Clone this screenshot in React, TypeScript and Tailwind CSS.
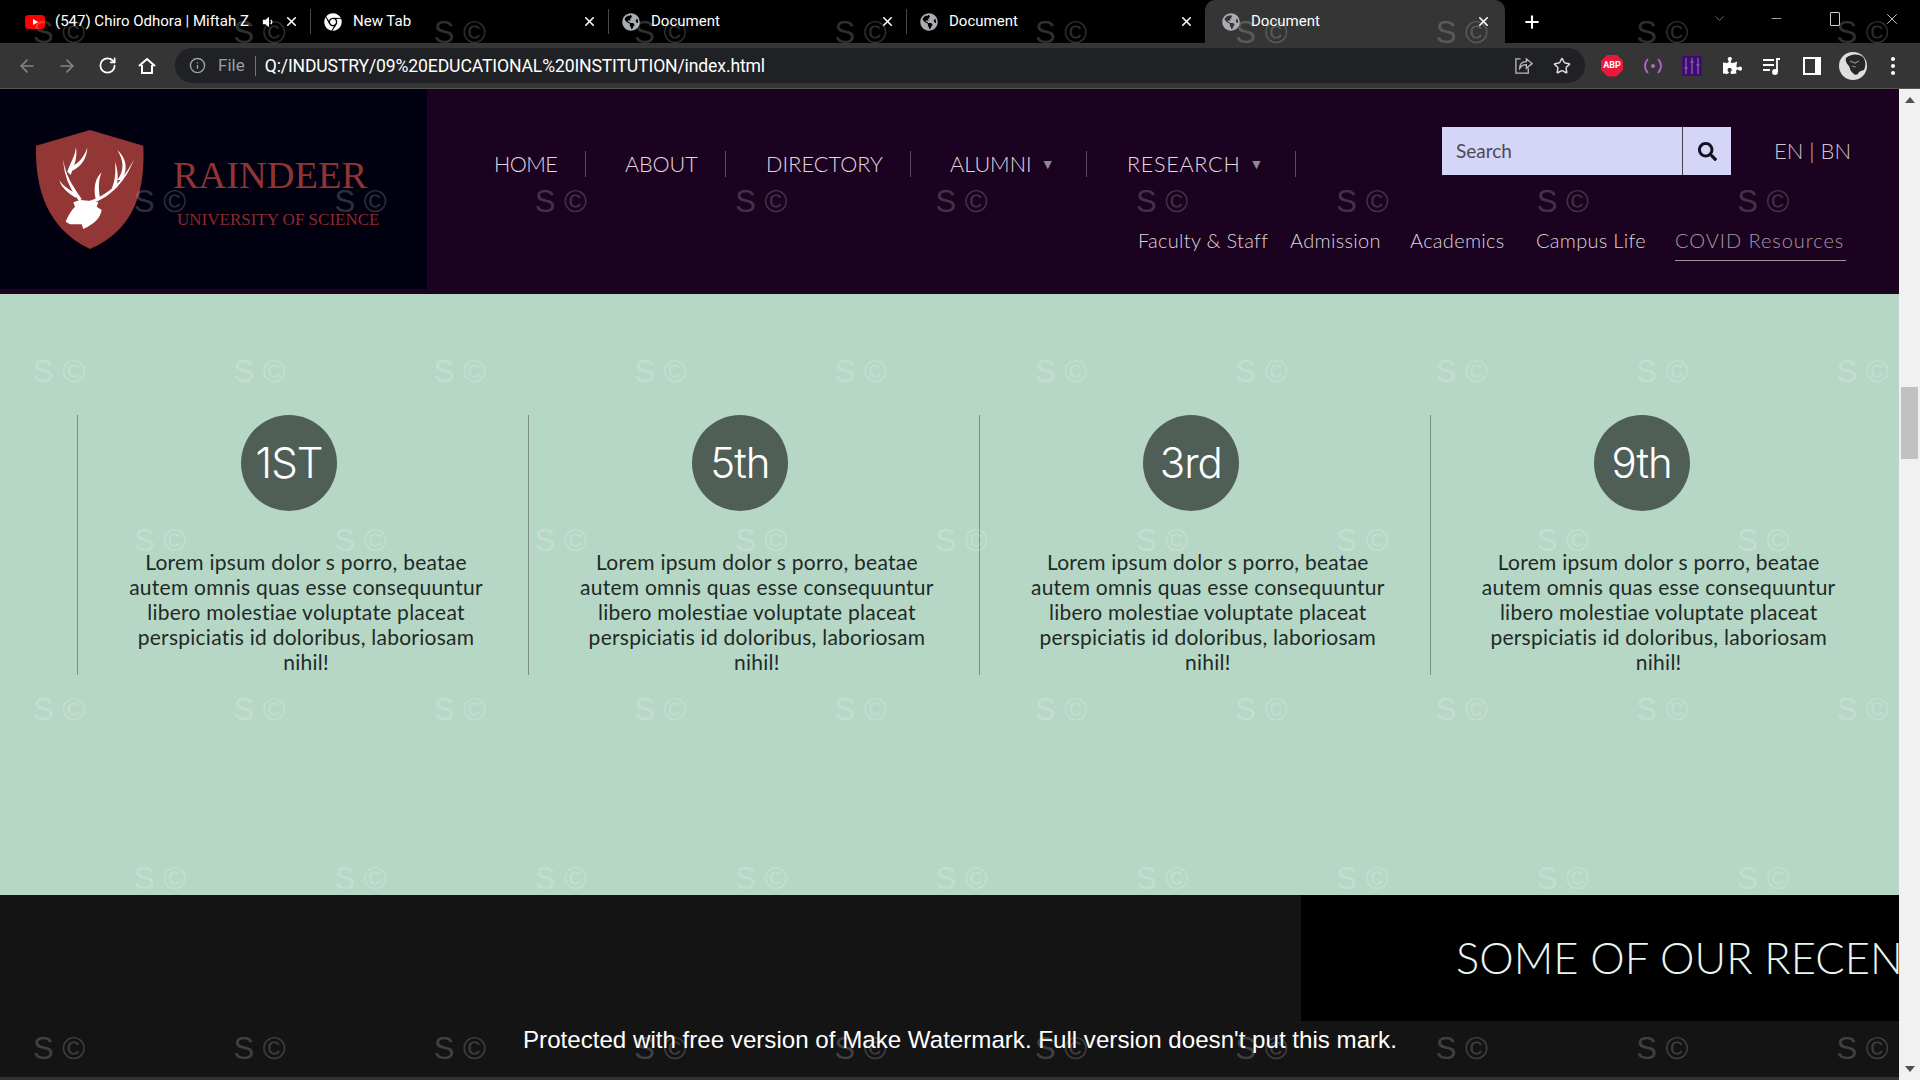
import { ArrowLeft, ArrowRight, ChevronDown, Info, Minus, Plus, RotateCw, Star, X } from "lucide-react";
import { FaChrome, FaGlobeAmericas, FaPuzzlePiece, FaSearch } from "react-icons/fa";

const TABS = [
  { title: "(547) Chiro Odhora | Miftah Z", icon: "yt" },
  { title: "New Tab", icon: "chrome" },
  { title: "Document", icon: "globe" },
  { title: "Document", icon: "globe" },
  { title: "Document", icon: "globe", active: true },
];

const NAV = [
  { label: "HOME", w: "w-[92px]", pl: "pl-0", track: "tracking-[-0.6px]" },
  { label: "ABOUT", w: "w-[140px]", pl: "pl-[39px]", track: "tracking-[-0.1px]" },
  { label: "DIRECTORY", w: "w-[185px]", pl: "pl-[40px]", track: "tracking-[0.1px]" },
  { label: "ALUMNI", w: "w-[176px]", pl: "pl-[39px]", track: "tracking-[0px]", caret: true },
  { label: "RESEARCH", w: "w-[209px]", pl: "pl-[40px]", track: "tracking-[0.7px]", caret: true },
];

const SUB_NAV = ["Faculty & Staff", "Admission", "Academics", "Campus Life"];

const STATS = ["1ST", "5th", "3rd", "9th"];

const LOREM = [
  "Lorem ipsum dolor s porro, beatae",
  "autem omnis quas esse consequuntur",
  "libero molestiae voluptate placeat",
  "perspiciatis id doloribus, laboriosam",
  "nihil!",
];

const WM_ROWS = [false, true, false, true, false, true, false];

function TabIcon({ kind }: { kind: string }) {
  if (kind === "yt") {
    return (
      <svg viewBox="0 0 20 14" className="w-[20px] h-[14px]">
        <rect width="20" height="14" rx="3.5" fill="#f00" />
        <path d="M8 4v6l5-3Z" fill="#fff" />
      </svg>
    );
  }
  if (kind === "chrome") return <FaChrome className="w-[18px] h-[18px] text-white" />;
  return <FaGlobeAmericas className="w-[18px] h-[18px] text-[#a9adb2]" />;
}

function TabStrip() {
  return (
    <div className="h-[43px] bg-black flex items-center pl-[13px] text-white">
      {TABS.map((tab, i) => (
        <div
          key={i}
          className={
            tab.active
              ? "w-[300px] h-[43px] bg-[#353535] rounded-t-[10px] flex items-center pl-[16px] pr-[14px]"
              : "w-[298px] h-[43px] flex items-center pl-[12px] pr-[11px]"
          }
        >
          <div className="w-[20px] flex justify-center shrink-0">
            <TabIcon kind={tab.icon} />
          </div>
          <span className="ml-[10px] flex-1 text-[15px] whitespace-nowrap overflow-hidden font-['Roboto',sans-serif]">
            {tab.title}
          </span>
          {tab.icon === "yt" && (
            <svg viewBox="0 0 16 16" className="w-[14px] h-[14px] mx-[8px] text-white" fill="currentColor">
              <path d="M1 5.5h3L8 2v12l-4-3.5H1Z" />
              <path d="M10 5.5c1.4 1.4 1.4 3.6 0 5" fill="none" stroke="currentColor" strokeWidth="1.3" />
            </svg>
          )}
          <X className="w-[15px] h-[15px]" strokeWidth={2.5} />
          {!tab.active && i < 3 && <div className="w-px h-[25px] bg-[#4a4a4a] ml-[11px] -mr-[11px]" />}
        </div>
      ))}
      <Plus className="w-[20px] h-[20px] ml-[17px]" strokeWidth={2.5} />
      <ChevronDown className="w-[15px] h-[15px] ml-[170px] mb-[7px] text-[#aaa]" strokeWidth={1} />
      <Minus className="w-[15px] h-[15px] ml-[42px] mb-[7px]" strokeWidth={1} />
      <div className="w-[10px] h-[14px] border border-[#ccc] rounded-[1px] ml-[46px] mb-[6px]" />
      <X className="w-[18px] h-[18px] ml-[43px] mb-[6px]" strokeWidth={1} />
    </div>
  );
}

function Toolbar() {
  return (
    <div className="h-[46px] bg-[#353535] border-b border-[#555] flex items-center font-['Roboto',sans-serif]">
      <ArrowLeft className="w-[20px] h-[20px] ml-[17px] text-[#848484]" strokeWidth={2} />
      <ArrowRight className="w-[20px] h-[20px] ml-[20px] text-[#848484]" strokeWidth={2} />
      <RotateCw className="w-[19px] h-[19px] ml-[21px] text-white" strokeWidth={2.2} />
      <svg viewBox="0 0 20 20" className="w-[20px] h-[20px] ml-[20px] text-white" fill="none" stroke="currentColor" strokeWidth="2">
        <path d="M2 10 10 3l8 7M5 9v8h10V9" />
      </svg>
      <div className="ml-[18px] w-[1410px] h-[35px] rounded-full bg-[#202124] flex items-center">
        <Info className="w-[17px] h-[17px] ml-[14px] text-[#9aa0a6]" strokeWidth={2} />
        <span className="ml-[12px] text-[#9aa0a6] text-[17px]">File</span>
        <div className="w-px h-[20px] bg-[#777] ml-[10px]" />
        <span className="ml-[9px] mt-[1px] text-white text-[17.6px] tracking-[-0.14px]">Q:/INDUSTRY/09%20EDUCATIONAL%20INSTITUTION/index.html</span>
        <svg viewBox="0 0 20 20" className="w-[19px] h-[19px] ml-auto text-[#bbb]" fill="none" stroke="currentColor" strokeWidth="1.4">
          <path d="M7 3H2v15h13v-5" />
          <path d="M6 13c0-5 3-7 7-7V3l6 5-6 5V9c-3 0-5 1-7 4Z" />
        </svg>
        <Star className="w-[18px] h-[18px] ml-[20px] mr-[14px] text-[#ddd]" strokeWidth={2} />
      </div>
      <div className="ml-[16px] w-[22px] h-[22px] bg-[#e8193c] flex items-center justify-center text-white text-[9px] font-bold [clip-path:polygon(30%_0,70%_0,100%_30%,100%_70%,70%_100%,30%_100%,0_70%,0_30%)]">
        ABP
      </div>
      <svg viewBox="0 0 22 22" className="w-[22px] h-[22px] ml-[19px] text-[#b765d0]" fill="none" stroke="currentColor" strokeWidth="1.7">
        <path d="M6 4c-4 4-4 10 0 14M16 4c4 4 4 10 0 14" />
        <circle cx="11" cy="11" r="1.2" fill="currentColor" />
      </svg>
      <svg viewBox="0 0 20 20" className="w-[20px] h-[20px] ml-[18px]">
        <rect width="20" height="20" rx="2" fill="#3f0a73" />
        <path d="M4 2v16M10 2v16M16 2v16" stroke="#7a5aa0" strokeWidth="1.5" />
        <path d="M2.5 12h3M8.5 6h3M14.5 9h3" stroke="#7a5aa0" strokeWidth="2" />
      </svg>
      <FaPuzzlePiece className="w-[19px] h-[19px] ml-[21px] text-white" />
      <svg viewBox="0 0 20 20" className="w-[20px] h-[20px] ml-[20px] text-white" fill="none" stroke="currentColor" strokeWidth="1.8">
        <path d="M1 4h11M1 9h11M1 14h7" />
        <circle cx="13" cy="16" r="2" fill="currentColor" />
        <path d="M15 16V3h3" />
      </svg>
      <div className="w-[18px] h-[18px] ml-[21px] border-[2px] border-r-[6px] border-white" />
      <svg viewBox="0 0 28 28" className="w-[28px] h-[28px] ml-[18px]">
        <circle cx="14" cy="14" r="14" fill="#dedede" />
        <path d="M7 6c4-4 12-5 17-1 3 4 3 9 1 13-3 1-5 1-6 4-2 1-4 1-5-1-3-2-3-5-4-7-2-2-4-5-3-8Z" fill="#262626" />
        <path d="M11 9l5 2 4-2M13 14l4 1" stroke="#8a8a8a" strokeWidth="1.2" fill="none" />
      </svg>
      <div className="ml-[24px] flex flex-col gap-[3px]">
        <span className="w-[4px] h-[4px] rounded-full bg-white" />
        <span className="w-[4px] h-[4px] rounded-full bg-white" />
        <span className="w-[4px] h-[4px] rounded-full bg-white" />
      </div>
    </div>
  );
}

function Shield() {
  return (
    <svg viewBox="0 0 360 390" className="w-[120px] h-[130px] ml-[30px] mt-[36px] shrink-0">
      <path d="M180 15 340 62C345 190 320 310 180 372 50 310 15 190 18 62Z" fill="#933636" />
      <g fill="#fff">
        <path d="M130 232 150 225 185 228 205 232 200 245 215 255C210 280 195 295 160 312L155 298 120 298 107 290C115 270 125 255 135 245Z" />
        <path d="M147 228C125 195 105 170 99 103 108 150 120 170 155 222Z" />
        <path d="M112 140C122 110 135 95 138 65 142 100 135 115 122 150Z" />
        <path d="M122 125C145 115 160 100 172 68 170 100 155 125 125 138Z" />
        <path d="M137 218C115 205 95 190 88 165 100 185 120 195 142 208Z" />
        <path d="M178 228C220 215 270 185 312 103 290 165 240 220 185 235Z" />
        <path d="M262 165C285 135 280 105 262 75 290 100 295 135 275 165Z" />
        <path d="M245 190C255 170 258 140 255 110 266 140 265 170 258 185Z" />
        <path d="M197 222C190 190 195 160 215 142 205 165 205 190 210 218Z" />
      </g>
    </svg>
  );
}

function Header() {
  return (
    <header className="h-[205px] bg-[#1a0220] flex items-start font-['Lato',sans-serif]">
      <div className="w-[427px] h-[200px] bg-[#000010] flex shrink-0">
        <Shield />
        <div className="ml-[23px] mt-[64px] font-['Liberation_Serif',serif]">
          <div className="text-[38.4px] leading-[44px] text-[#8f3535]">RAINDEER</div>
          <div className="ml-[4px] mt-[13px] text-[17px] leading-[20px] text-[#8e2a2e] whitespace-nowrap">UNIVERSITY OF SCIENCE</div>
        </div>
      </div>

      <nav className="ml-[67px] mt-[62px] flex shrink-0">
        {NAV.map((item) => (
          <div
            key={item.label}
            className={`${item.w} ${item.pl} ${item.track} h-[26px] border-r border-[#5d4a5f] flex items-center text-[21.6px] text-[#e2d8de] font-light whitespace-nowrap`}
          >
            {item.label}
            {item.caret && <span className="ml-[9px] text-[14px] text-[#8f8a8f] font-['DejaVu_Sans',sans-serif]">▼</span>}
          </div>
        ))}
      </nav>

      <div className="ml-[146px] w-[457px] shrink-0 relative h-[200px]">
        <div className="mt-[38px] flex items-center">
          <div className="w-[289px] h-[48px] bg-[#d5d5f7] flex items-center">
            <span className="flex-1 pl-[14px] text-[19px] text-[#4a4a55]">Search</span>
            <div className="w-[49px] h-full border-l border-[#444] flex items-center justify-center">
              <FaSearch className="w-[19px] h-[19px] text-[#14101c]" />
            </div>
          </div>
          <span className="ml-[43px] mb-[2px] text-[22px] text-[#cfc6cc] font-light whitespace-nowrap">EN | BN</span>
        </div>
        <div className="absolute left-[-304px] top-[137px] flex items-start text-[20px] leading-[28px] tracking-[0.3px] text-[#dcd5da] font-light whitespace-nowrap">
          {SUB_NAV.map((label, i) => (
            <span key={label} className={["w-[152px]", "w-[120px]", "w-[126px]", "w-[139px]"][i]}>
              {label}
            </span>
          ))}
          <span className="w-[171px] h-[35px] border-b border-[#a8909a] text-[#a89aa2] tracking-[0.95px]">COVID Resources</span>
        </div>
      </div>
    </header>
  );
}

function Stats() {
  return (
    <section className="h-[601px] bg-[#b6d7c6] pt-[121px] pl-[77px]">
      <div className="flex">
        {STATS.map((stat) => (
          <div key={stat} className="w-[450.9px] h-[260px] border-l border-[#7e8f86] shrink-0">
            <div className="ml-[163px] w-[96px] h-[96px] pb-[2px] rounded-full bg-[#4f5e57] flex items-center justify-center text-white text-[42px] tracking-[-1px] font-light font-['Inter',sans-serif]">
              {stat}
            </div>
            <p className="mt-[38px] ml-[38px] w-[380px] text-center text-[21px] tracking-[0.25px] leading-[25px] text-[#1f2a26] [font-variant-ligatures:none] font-['Lato',sans-serif] whitespace-nowrap">
              {LOREM.map((line) => (
                <span key={line} className="block">{line}</span>
              ))}
            </p>
          </div>
        ))}
      </div>
    </section>
  );
}

function Recent() {
  return (
    <section className="h-[182px] bg-[#141414] border-b-[3px] border-[#333] box-content">
      <div className="ml-auto w-[598px] h-[126px] bg-black overflow-hidden flex items-center pl-[155px] whitespace-nowrap text-[43.5px] text-[#e8f5f0] font-light font-['Lato',sans-serif]">
        SOME OF OUR RECEN
      </div>
    </section>
  );
}

function Scrollbar() {
  return (
    <div className="w-[21px] bg-[#f1f1f1] shrink-0 flex flex-col items-center">
      <div className="mt-[8px] w-0 h-0 border-x-[5px] border-x-transparent border-b-[6px] border-b-[#505050]" />
      <div className="mt-[284px] w-[17px] h-[72px] bg-[#c1c1c1]" />
      <div className="mt-auto mb-[8px] w-0 h-0 border-x-[5px] border-x-transparent border-t-[6px] border-t-[#505050]" />
    </div>
  );
}

function Watermarks() {
  return (
    <div className="absolute inset-0 pointer-events-none flex flex-col gap-[133.3px] pt-[15px] text-white/20 text-[31px] leading-[36px] font-['Liberation_Sans',sans-serif]">
      {WM_ROWS.map((offset, r) => (
        <div key={r} className={offset ? "flex gap-[148px] pl-[134px] whitespace-nowrap" : "flex gap-[148px] pl-[33px] whitespace-nowrap"}>
          {Array.from({ length: offset ? 9 : 10 }).map((_, i) => (
            <span key={i} className="w-[52.4px] shrink-0">S ©</span>
          ))}
        </div>
      ))}
    </div>
  );
}

export default function App() {
  return (
    <div className="relative w-[1920px] h-[1080px] overflow-hidden bg-black">
      <TabStrip />
      <Toolbar />
      <div className="flex">
        <main className="w-[1899px] shrink-0">
          <Header />
          <Stats />
          <Recent />
        </main>
        <Scrollbar />
      </div>
      <Watermarks />
      <div className="absolute left-[523px] top-[1024px] text-[24.13px] leading-[32px] text-white whitespace-nowrap font-['Liberation_Sans',sans-serif]">
        Protected with free version of Make Watermark. Full version doesn't put this mark.
      </div>
    </div>
  );
}
